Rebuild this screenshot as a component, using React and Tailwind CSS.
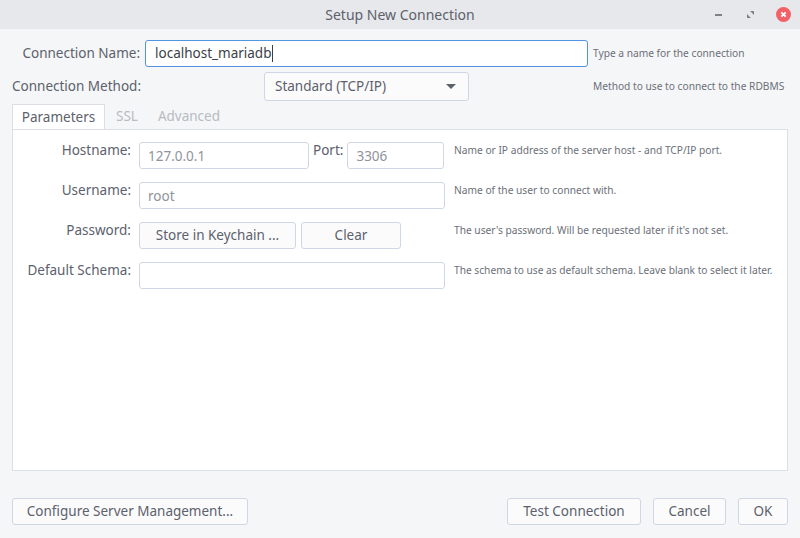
import React from "react";

const font = { fontFamily: '"Noto Sans", "Open Sans", sans-serif' };

function Btn({ children, className = "" }) {
  return (
    <button
      className={`h-[27px] shrink-0 whitespace-nowrap rounded-[3px] border border-[#cfd6e6] bg-[#fbfbfc] text-[13.5px] text-[#5c616c] ${className}`}
    >
      {children}
    </button>
  );
}

function Field({ value, className = "", dim = true }) {
  return (
    <div
      className={`h-[27px] shrink-0 rounded-[3px] border border-[#cfd6e6] bg-white px-[8px] pt-[3px] text-[13.5px] ${
        dim ? "text-[#8f949b]" : "text-[#4b5162]"
      } ${className}`}
    >
      {value}
    </div>
  );
}

function Help({ children }) {
  return (
    <div className="whitespace-nowrap pl-[9px] pt-[1px] text-[10.2px] text-[#6b7079]">{children}</div>
  );
}

function Row({ label, children, help }) {
  return (
    <div className="flex h-[27px]">
      <div className="w-[118px] shrink-0 -mt-[2px] whitespace-nowrap text-right text-[13.5px] text-[#5c616c]">
        {label}
      </div>
      <div className="ml-[8px] flex w-[306px] shrink-0 gap-[4px]">{children}</div>
      <Help>{help}</Help>
    </div>
  );
}

export default function App() {
  return (
    <div className="flex h-[538px] w-[800px] flex-col overflow-hidden bg-[#f5f6f7]" style={font}>
      {/* title bar */}
      <div className="relative flex h-[29px] shrink-0 items-center justify-center bg-[#e7e8eb] text-[14px] text-[#5c616c]">
        Setup New Connection
        <div className="absolute right-[9px] top-0 flex h-[29px] items-center">
          <div className="h-[2px] w-[7px] bg-[#7c818c]" />
          <svg className="ml-[25px]" width="7" height="7" viewBox="0 0 8 8">
            <path d="M3.5 0h4.5v4.5zM0 3.5v4.5h4.5z" fill="#7c818c" />
          </svg>
          <div className="ml-[22px] flex h-[15px] w-[15px] items-center justify-center rounded-full bg-[#f46067]">
            <svg width="7" height="7" viewBox="0 0 8 8">
              <path d="M1.5 1.5l5 5M6.5 1.5l-5 5" stroke="white" strokeWidth="2.2" />
            </svg>
          </div>
        </div>
      </div>

      <div className="flex flex-1 flex-col px-[12px]">
        {/* connection name */}
        <div className="mt-[11px] flex h-[27px] items-center">
          <div className="w-[128px] shrink-0 whitespace-nowrap text-right text-[13.5px] text-[#5c616c]">
            Connection Name:
          </div>
          <div className="ml-[5px] flex h-[27px] w-[443px] shrink-0 items-center rounded-[3px] border border-[#5294e2] bg-white px-[9px] text-[13.5px] text-[#3b3f47]">
            localhost_mariadb
            <span className="ml-[1px] h-[17px] w-[1px] bg-[#3b3f47]" />
          </div>
          <div className="ml-[5px] whitespace-nowrap text-[10.2px] text-[#6b7079]">Type a name for the connection</div>
        </div>

        {/* connection method */}
        <div className="mt-[5px] flex h-[29px] items-center">
          <div className="w-[252px] shrink-0 whitespace-nowrap text-[13.5px] text-[#5c616c]">Connection Method:</div>
          <div className="flex h-[29px] w-[205px] shrink-0 items-center justify-between rounded-[3px] border border-[#cfd6e6] bg-[#fbfbfc] pl-[10px] pr-[12px] text-[13.5px] text-[#5c616c]">
            Standard (TCP/IP)
            <svg width="10" height="6" viewBox="0 0 10 6">
              <path d="M0 0h10L5 5z" fill="#5c616c" />
            </svg>
          </div>
          <div className="ml-[124px] whitespace-nowrap text-[10.2px] text-[#6b7079]">
            Method to use to connect to the RDBMS
          </div>
        </div>

        {/* tabs */}
        <div className="mt-[3px] flex h-[25px] shrink-0 items-end text-[13.5px]">
          <div className="flex h-[25px] w-[93px] items-center justify-center border border-b-0 border-[#dcdfe3] bg-white text-[#5c616c]">
            Parameters
          </div>
          <div className="ml-[11px] pb-[3px] text-[#b8bbc1]">SSL</div>
          <div className="ml-[20px] pb-[3px] text-[#b8bbc1]">Advanced</div>
        </div>
        <div className="flex h-[342px] shrink-0 flex-col gap-[13px] border border-[#dcdfe3] bg-white pt-[12px]">
          <Row label="Hostname:" help="Name or IP address of the server host - and TCP/IP port.">
            <Field value="127.0.0.1" className="w-[170px]" />
            <div className="-mt-[2px] text-[13.5px] text-[#5c616c]">Port:</div>
            <Field value="3306" className="w-[97px]" />
          </Row>
          <Row label="Username:" help="Name of the user to connect with.">
            <Field value="root" className="w-[306px]" />
          </Row>
          <Row label="Password:" help="The user's password. Will be requested later if it's not set.">
            <Btn className="w-[157px]">Store in Keychain ...</Btn>
            <Btn className="ml-[1px] w-[100px]">Clear</Btn>
          </Row>
          <Row label="Default Schema:" help="The schema to use as default schema. Leave blank to select it later.">
            <Field value="" className="w-[306px]" />
          </Row>
        </div>

        {/* bottom buttons */}
        <div className="mt-[27px] flex">
          <Btn className="w-[236px]">Configure Server Management...</Btn>
          <div className="flex-1" />
          <Btn className="w-[134px]">Test Connection</Btn>
          <Btn className="ml-[12px] w-[73px]">Cancel</Btn>
          <Btn className="ml-[12px] w-[50px]">OK</Btn>
        </div>
      </div>
    </div>
  );
}
